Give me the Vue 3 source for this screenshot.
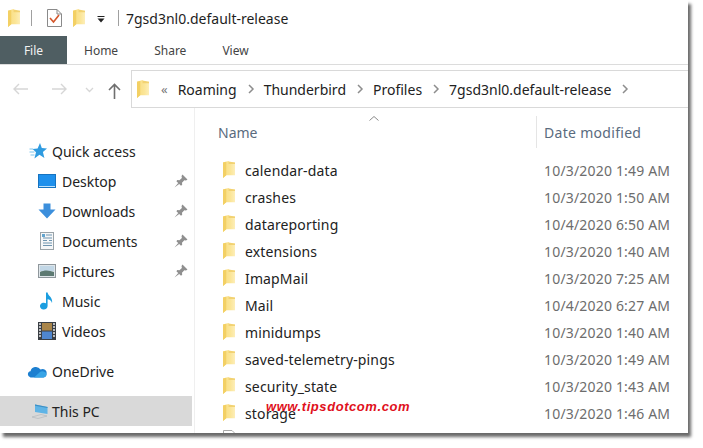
<script setup>
const pinned = [
  { name: 'Desktop', icon: 'desktop' },
  { name: 'Downloads', icon: 'downloads' },
  { name: 'Documents', icon: 'documents' },
  { name: 'Pictures', icon: 'pictures' },
]
const rows = [
  ['calendar-data', '10/3/2020 1:49 AM'],
  ['crashes', '10/3/2020 1:50 AM'],
  ['datareporting', '10/4/2020 6:50 AM'],
  ['extensions', '10/3/2020 1:40 AM'],
  ['ImapMail', '10/3/2020 7:25 AM'],
  ['Mail', '10/4/2020 6:27 AM'],
  ['minidumps', '10/3/2020 1:40 AM'],
  ['saved-telemetry-pings', '10/3/2020 1:49 AM'],
  ['security_state', '10/3/2020 1:43 AM'],
  ['storage', '10/3/2020 1:46 AM'],
]
const crumbs = ['Roaming', 'Thunderbird', 'Profiles', '7gsd3nl0.default-release']
</script>

<template>
  <div class="page">
    <svg class="defs" width="0" height="0" aria-hidden="true">
      <defs>
        <linearGradient id="fg" x1="0" x2="1" y1="0" y2="0">
          <stop offset="0" stop-color="#f8dc80" />
          <stop offset="0.6" stop-color="#fbe596" />
          <stop offset="1" stop-color="#fdeeb8" />
        </linearGradient>
        <symbol id="folder" viewBox="0 0 13 16" preserveAspectRatio="none">
          <path d="M0 1.5 L6 0 L7 1.5 L13 1.5 L13 13.5 L3.5 13.5 L0 16 Z" fill="url(#fg)" />
          <path d="M0 1.5 L3.5 0.8 L3.5 13.5 L0 16 Z" fill="#f3d064" />
          <path d="M6 0.5 L13 1.5 L13 2.8 L6 2.8 Z" fill="#f2d272" />
        </symbol>
        <symbol id="pin" viewBox="0 0 14 14">
          <path d="M8.5 0.5 L13.5 5.5 L12 6.6 L10.3 6.2 L8 8.8 L8.2 10.8 L7 11.8 L2.4 7.2 L3.3 6 L5.4 6.2 L7.9 3.9 L7.5 2.1 Z M4.2 9 L0.5 13.5 L5.2 10 Z" fill="#8f8f8f" />
        </symbol>
        <symbol id="chev" viewBox="0 0 8 10">
          <path d="M2 1 L6 5 L2 9" fill="none" stroke="#8d8d8d" stroke-width="1.5" />
        </symbol>
      </defs>
    </svg>

    <div class="window">
      <header class="titlebar">
        <svg class="qa-folder" width="12" height="18"><use href="#folder" /></svg>
        <span class="sep first"></span>
        <svg class="check" width="15" height="18" viewBox="0 0 15 18">
          <path d="M0.5 0.5 H10 L14.5 5 V17.5 H0.5 Z" fill="#fff" stroke="#8a8a8a" />
          <path d="M10 0.5 V5 H14.5" fill="none" stroke="#8a8a8a" />
          <path d="M3 9 L6.5 13 L12 6" fill="none" stroke="#d4562a" stroke-width="1.6" />
        </svg>
        <svg class="qa-folder second" width="12" height="18"><use href="#folder" /></svg>
        <svg class="drop" width="8" height="7" viewBox="0 0 8 7">
          <path d="M0.5 0.5 H7.5" stroke="#222" />
          <path d="M0.5 2.5 H7.5 L4 6.5 Z" fill="#222" />
        </svg>
        <span class="sep second"></span>
        <span class="wintitle">7gsd3nl0.default-release</span>
      </header>

      <nav class="tabs">
        <span class="tab file">File</span>
        <span class="tab home">Home</span>
        <span class="tab share">Share</span>
        <span class="tab view">View</span>
      </nav>

      <div class="addressrow">
        <div class="navbtns">
          <svg width="15" height="12" viewBox="0 0 15 12"><path d="M15 6 H1 M6 1 L1 6 L6 11" fill="none" stroke="#d6d6d6" stroke-width="1.4" /></svg>
          <svg class="fwd" width="15" height="12" viewBox="0 0 15 12"><path d="M0 6 H14 M9 1 L14 6 L9 11" fill="none" stroke="#d6d6d6" stroke-width="1.4" /></svg>
          <svg class="down" width="9" height="6" viewBox="0 0 9 6"><path d="M1 1 L4.5 4.5 L8 1" fill="none" stroke="#d6d6d6" stroke-width="1.3" /></svg>
          <svg class="up" width="13" height="16" viewBox="0 0 13 16"><path d="M6.5 16 V1.5 M1 7 L6.5 1.5 L12 7" fill="none" stroke="#6f6f6f" stroke-width="1.6" /></svg>
        </div>
        <div class="address">
          <svg class="addr-folder" width="12" height="18"><use href="#folder" /></svg>
          <span class="more">«</span>
          <template v-for="c in crumbs" :key="c">
            <span class="crumb">{{ c }}</span>
            <svg class="chev" width="8" height="10"><use href="#chev" /></svg>
          </template>
        </div>
      </div>

      <div class="body">
        <aside class="sidebar">
          <div class="nav top">
            <svg class="n-ic" width="18" height="16" viewBox="0 0 18 16">
              <path d="M11 0 L12.8 5 L18 5.4 L13.9 8.9 L15.4 15 L10.5 11.8 L5.4 15.5 L7 9.3 L3.6 6 L8.6 5.4 Z" fill="#2f9be0" />
              <path d="M0.5 6 H4 M0.5 9 H5.5 M1.5 12 H5.5" stroke="#7cc4ec" stroke-width="1" />
            </svg>
            <span>Quick access</span>
          </div>
          <div v-for="p in pinned" :key="p.name" class="nav child">
            <svg v-if="p.icon === 'desktop'" class="c-ic" width="18" height="14" viewBox="0 0 18 14">
              <rect x="0.5" y="0.5" width="17" height="13" fill="#1e90ec" stroke="#1673c0" />
              <path d="M1 12.5 H17" stroke="#bfe2fb" />
            </svg>
            <svg v-else-if="p.icon === 'downloads'" class="c-ic" width="18" height="16" viewBox="0 0 18 16">
              <path d="M5.5 0.5 H12.5 V6.5 H17.5 L9 15.5 L0.5 6.5 H5.5 Z" fill="#3c8fdc" />
            </svg>
            <svg v-else-if="p.icon === 'documents'" class="c-ic" width="18" height="18" viewBox="0 0 18 18">
              <rect x="2.5" y="0.5" width="13" height="17" fill="#f6f7f8" stroke="#9aa3a8" />
              <path d="M8 3 H14 M5 6 H14 M5 8.5 H9 M11 8.5 H14 M5 11 H14 M5 13.5 H14" stroke="#6f95b0" />
              <rect x="4" y="2" width="3" height="3" fill="#63a5cf" />
            </svg>
            <svg v-else class="c-ic" width="18" height="14" viewBox="0 0 18 14">
              <rect x="0.5" y="0.5" width="17" height="13" fill="#dfe6ea" stroke="#8f979c" />
              <rect x="2" y="2" width="14" height="5" fill="#c2d7e6" />
              <path d="M2 8 C6 6 11 6 16 8 V12 H2 Z" fill="#5d7a72" />
            </svg>
            <span class="grow">{{ p.name }}</span>
            <svg class="pin" width="14" height="14"><use href="#pin" /></svg>
          </div>
          <div class="nav child">
            <svg class="c-ic" width="18" height="18" viewBox="0 0 18 18">
              <path d="M8 0.5 H9.6 C10.2 4.5 15 5 14 11 C13.2 8.5 11.5 7.5 9.6 7.3 V14 A3.8 3.4 0 1 1 8 11.3 Z" fill="#1b9ee0" />
            </svg>
            <span>Music</span>
          </div>
          <div class="nav child">
            <svg class="c-ic" width="18" height="18" viewBox="0 0 18 18">
              <rect x="0" y="0" width="18" height="18" fill="#3a3f45" />
              <rect x="4" y="1" width="10" height="7.5" fill="#a9854a" />
              <rect x="4" y="9.5" width="10" height="7.5" fill="#4f86cf" />
              <path d="M1 2 H3 M1 5 H3 M1 8 H3 M1 11 H3 M1 14 H3 M15 2 H17 M15 5 H17 M15 8 H17 M15 11 H17 M15 14 H17" stroke="#e8e8e8" stroke-width="1.4" />
            </svg>
            <span>Videos</span>
          </div>
          <div class="nav top drive">
            <svg class="n-ic cloud" width="20" height="13" viewBox="0 0 20 13">
              <path d="M3.5 12.5 A3.2 3.2 0 0 1 3.5 6.2 A5.5 5.5 0 0 1 13.5 4.6 A4 4 0 0 1 19.5 9 A3.5 3.5 0 0 1 16.5 12.5 Z" fill="#1c7fd0" />
              <path d="M7 12.5 L13 7 C15 5.5 18.5 6.5 19.5 9 A3.5 3.5 0 0 1 16.5 12.5 Z" fill="#37a4e6" />
            </svg>
            <span>OneDrive</span>
          </div>
          <div class="nav top selected">
            <svg class="n-ic pc" width="16" height="15" viewBox="0 0 16 15">
              <path d="M3 0.5 L15.5 3 V10 L3 8 Z" fill="#5fb4e6" />
              <path d="M3 0.5 L15.5 3 L15.5 4 L3 1.8 Z" fill="#3d8fc4" />
              <path d="M0 13 L9 10.5 L15 12 L6 14.5 Z" fill="none" stroke="#b4b9bd" stroke-width="0.7" />
            </svg>
            <span>This PC</span>
          </div>
        </aside>

        <main class="files">
          <div class="colhead">
            <span class="col-name">Name</span>
            <svg class="sort" width="10" height="5" viewBox="0 0 10 5"><path d="M0.5 4.5 L5 0.5 L9.5 4.5" fill="none" stroke="#8a8a8a" /></svg>
            <span class="col-date">Date modified</span>
          </div>
          <div v-for="r in rows" :key="r[0]" class="row">
            <svg class="f-ic" width="12" height="17"><use href="#folder" /></svg>
            <span class="fname">{{ r[0] }}</span>
            <span class="fdate">{{ r[1] }}</span>
          </div>
          <div class="row">
            <svg class="f-ic doc" width="13" height="22" viewBox="0 0 13 22">
              <path d="M0.5 16 V0.5 H9 L12.5 4 V16" fill="#fff" stroke="#a8a8a8" />
            </svg>
          </div>
        </main>
      </div>

      <div class="watermark">www.tipsdotcom.com</div>
    </div>
  </div>
</template>

<style>
html, body { margin: 0; background: #fff; }
</style>

<style scoped>
.page {
  width: 703px;
  height: 448px;
  overflow: hidden;
  background: #fff;
  font-family: "Noto Sans", "Open Sans", sans-serif;
}
.defs { position: absolute; }
.window {
  position: relative;
  width: 688px;
  height: 433px;
  background: #fff;
  display: flex;
  flex-direction: column;
  box-shadow: 3px 4px 3px #6a6a6a;
}
.titlebar {
  height: 36px;
  display: flex;
  align-items: center;
  padding-left: 8px;
  flex: none;
}
.sep { width: 1px; height: 16px; background: #a0a0a0; }
.sep.first { margin-left: 11px; }
.check { margin-left: 15px; }
.qa-folder.second { margin-left: 11px; }
.drop { margin-left: 12px; margin-top: 3px; }
.sep.second { margin-left: 13px; }
.wintitle { margin-left: 7px; font-size: 14px; color: #1e1e1e; }
.tabs {
  height: 28px;
  flex: none;
  display: flex;
  align-items: center;
  border-bottom: 1px solid #dcdcdc;
  font-size: 12px;
  color: #444;
}
.tab.file {
  width: 67px;
  height: 28px;
  background: #4f5e62;
  color: #f2f2f2;
  display: flex;
  align-items: center;
  justify-content: center;
}
.tab.home { margin-left: 17px; }
.tab.share { margin-left: 36px; }
.tab.view { margin-left: 36px; }
.addressrow {
  height: 43px;
  flex: none;
  display: flex;
  align-items: flex-end;
}
.navbtns {
  width: 131px;
  height: 38px;
  display: flex;
  align-items: center;
  padding-left: 13px;
  box-sizing: border-box;
}
.fwd { margin-left: 24px; }
.down { margin-left: 18px; margin-top: 1px; }
.up { margin-left: 14px; margin-top: 3px; }
.address {
  flex: 1;
  height: 38px;
  box-sizing: border-box;
  border: 1px solid #d9d9d9;
  border-right: 0;
  display: flex;
  align-items: center;
  padding-left: 5px;
  font-size: 14px;
  color: #222;
}
.more { margin-left: 12px; margin-right: 2px; color: #777; font-size: 13px; }
.crumb { margin-left: 8px; }
.chev { margin-left: 10px; margin-right: 1px; }
.body { flex: 1; display: flex; min-height: 0; position: relative; }
.sidebar {
  width: 192px;
  margin-right: 2px;
  padding-top: 28px;
  box-sizing: border-box;
  flex: none;
  font-size: 14px;
  color: #222;
  overflow: hidden;
}
.nav { height: 30px; display: flex; align-items: center; }
.nav.top { padding-left: 29px; }
.nav.child { padding-left: 38px; padding-right: 4px; }
.n-ic { width: 18px; margin-right: 5px; flex: none; }
.cloud { margin-left: -2px; width: 20px; margin-right: 5px; }
.pc { margin-left: 3px; width: 16px; margin-right: 4px; }
.c-ic { margin-right: 6px; flex: none; }
.grow { flex: 1; }
.drive { margin-top: 10px; }
.selected { margin-top: 10px; background: #d9d9d9; }
.files {
  flex: 1;
  border-left: 1px solid #efefef;
  position: relative;
  overflow: hidden;
  font-size: 14px;
  min-width: 0;
}
.colhead {
  height: 49px;
  display: flex;
  align-items: flex-start;
  position: relative;
  color: #5a6b7e;
}
.col-name { margin-left: 23px; margin-top: 15px; }
.sort { position: absolute; left: 174px; top: 8px; }
.col-date {
  position: absolute;
  left: 341px;
  top: 8px;
  height: 32px;
  border-left: 1px solid #e5e5e5;
  padding-left: 7px;
  line-height: 34px;
  white-space: nowrap;
  letter-spacing: 0.3px;
}
.row { height: 27px; display: flex; align-items: center; color: #222; }
.f-ic { margin-left: 28px; flex: none; margin-top: -2px; }
.doc { margin-top: 0; }
.fname { margin-left: 10px; width: 299px; flex: none; white-space: nowrap; letter-spacing: 0.14px; }
.fdate { color: #6d6d6d; white-space: nowrap; letter-spacing: 0.18px; }
.watermark {
  position: absolute;
  left: 266px;
  top: 399px;
  color: #e01020;
  font-family: "Liberation Sans", sans-serif;
  font-size: 13px;
  font-style: italic;
  font-weight: 700;
  letter-spacing: 0.57px;
}
</style>
